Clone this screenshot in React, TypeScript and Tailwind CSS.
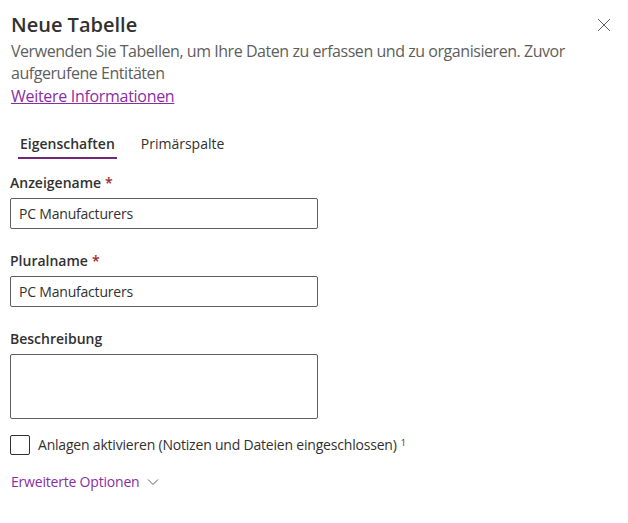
import React from "react";

const font = { fontFamily: '"Open Sans", "Noto Sans", sans-serif' };

function Field({ label, required, value }: { label: string; required?: boolean; value?: string }) {
  return (
    <div className="flex flex-col">
      <label className="text-[14px] font-semibold text-[#323130] leading-[20px]">
        {label}
        {required && <span className="text-[#a4262c] ml-1">*</span>}
      </label>
      <div className="mt-[5px] w-[308px] h-[31px] border border-[#605e5c] rounded-[2px] px-[8px] flex items-center text-[14px] text-[#323130] tracking-[-0.2px]">
        {value}
      </div>
    </div>
  );
}

export default function App() {
  return (
    <div className="w-[628px] h-[523px] bg-white relative" style={font}>
      {/* Header */}
      <div className="flex items-start justify-between pl-[11px] pr-[16px] pt-[11px]">
        <h1 className="text-[20px] font-semibold text-[#323130] leading-[28px]">Neue Tabelle</h1>
        <button className="mt-[6px] w-[16px] h-[16px] flex items-center justify-center text-[#605e5c]">
          <svg width="14" height="14" viewBox="0 0 14 14" fill="none" stroke="currentColor" strokeWidth="1">
            <path d="M1 1 L13 13 M13 1 L1 13" />
          </svg>
        </button>
      </div>

      <div className="pl-[11px] pr-[10px] mt-[1px]">
        <p className="text-[16px] leading-[22px] text-[#605e5c] tracking-[-0.45px]">
          Verwenden Sie Tabellen, um Ihre Daten zu erfassen und zu organisieren. Zuvor aufgerufene Entitäten
        </p>
        <a href="#" className="text-[16px] leading-[22px] text-[#8a2da5] underline tracking-[-0.3px]">
          Weitere Informationen
        </a>
      </div>

      {/* Tabs */}
      <div className="flex pl-[18px] mt-[26px] gap-[24px]">
        <div className="flex flex-col items-center">
          <span className="px-[2px] text-[14px] font-semibold text-[#323130] leading-[20px]">Eigenschaften</span>
          <span className="mt-[3px] h-[2px] w-full bg-[#742774]" />
        </div>
        <span className="text-[14px] text-[#323130] leading-[20px]">Primärspalte</span>
      </div>

      <div className="pl-[10px] mt-[14px] flex flex-col gap-[22px]">
        <Field label="Anzeigename" required value="PC Manufacturers" />
        <Field label="Pluralname" required value="PC Manufacturers" />
        <div className="flex flex-col">
          <label className="text-[14px] font-semibold text-[#323130] leading-[20px]">Beschreibung</label>
          <div className="mt-[5px] w-[308px] h-[65px] border border-[#605e5c] rounded-[2px]" />
        </div>
      </div>

      <div className="pl-[10px] mt-[15px] flex items-center">
        <span className="w-[20px] h-[20px] border border-[#323130] rounded-[2px]" />
        <span className="ml-[8px] text-[14px] text-[#323130] tracking-[-0.2px]">
          Anlagen aktivieren (Notizen und Dateien eingeschlossen)
          <sup className="ml-[4px] text-[9px]">1</sup>
        </span>
      </div>

      <div className="pl-[11px] mt-[16px] flex items-center gap-[8px] text-[14px] text-[#8a2da5] tracking-[-0.2px]">
        <span>Erweiterte Optionen</span>
        <svg width="12" height="8" viewBox="0 0 12 8" fill="none" stroke="#605e5c" strokeWidth="1">
          <path d="M1 1.5 L6 6.5 L11 1.5" />
        </svg>
      </div>
    </div>
  );
}
